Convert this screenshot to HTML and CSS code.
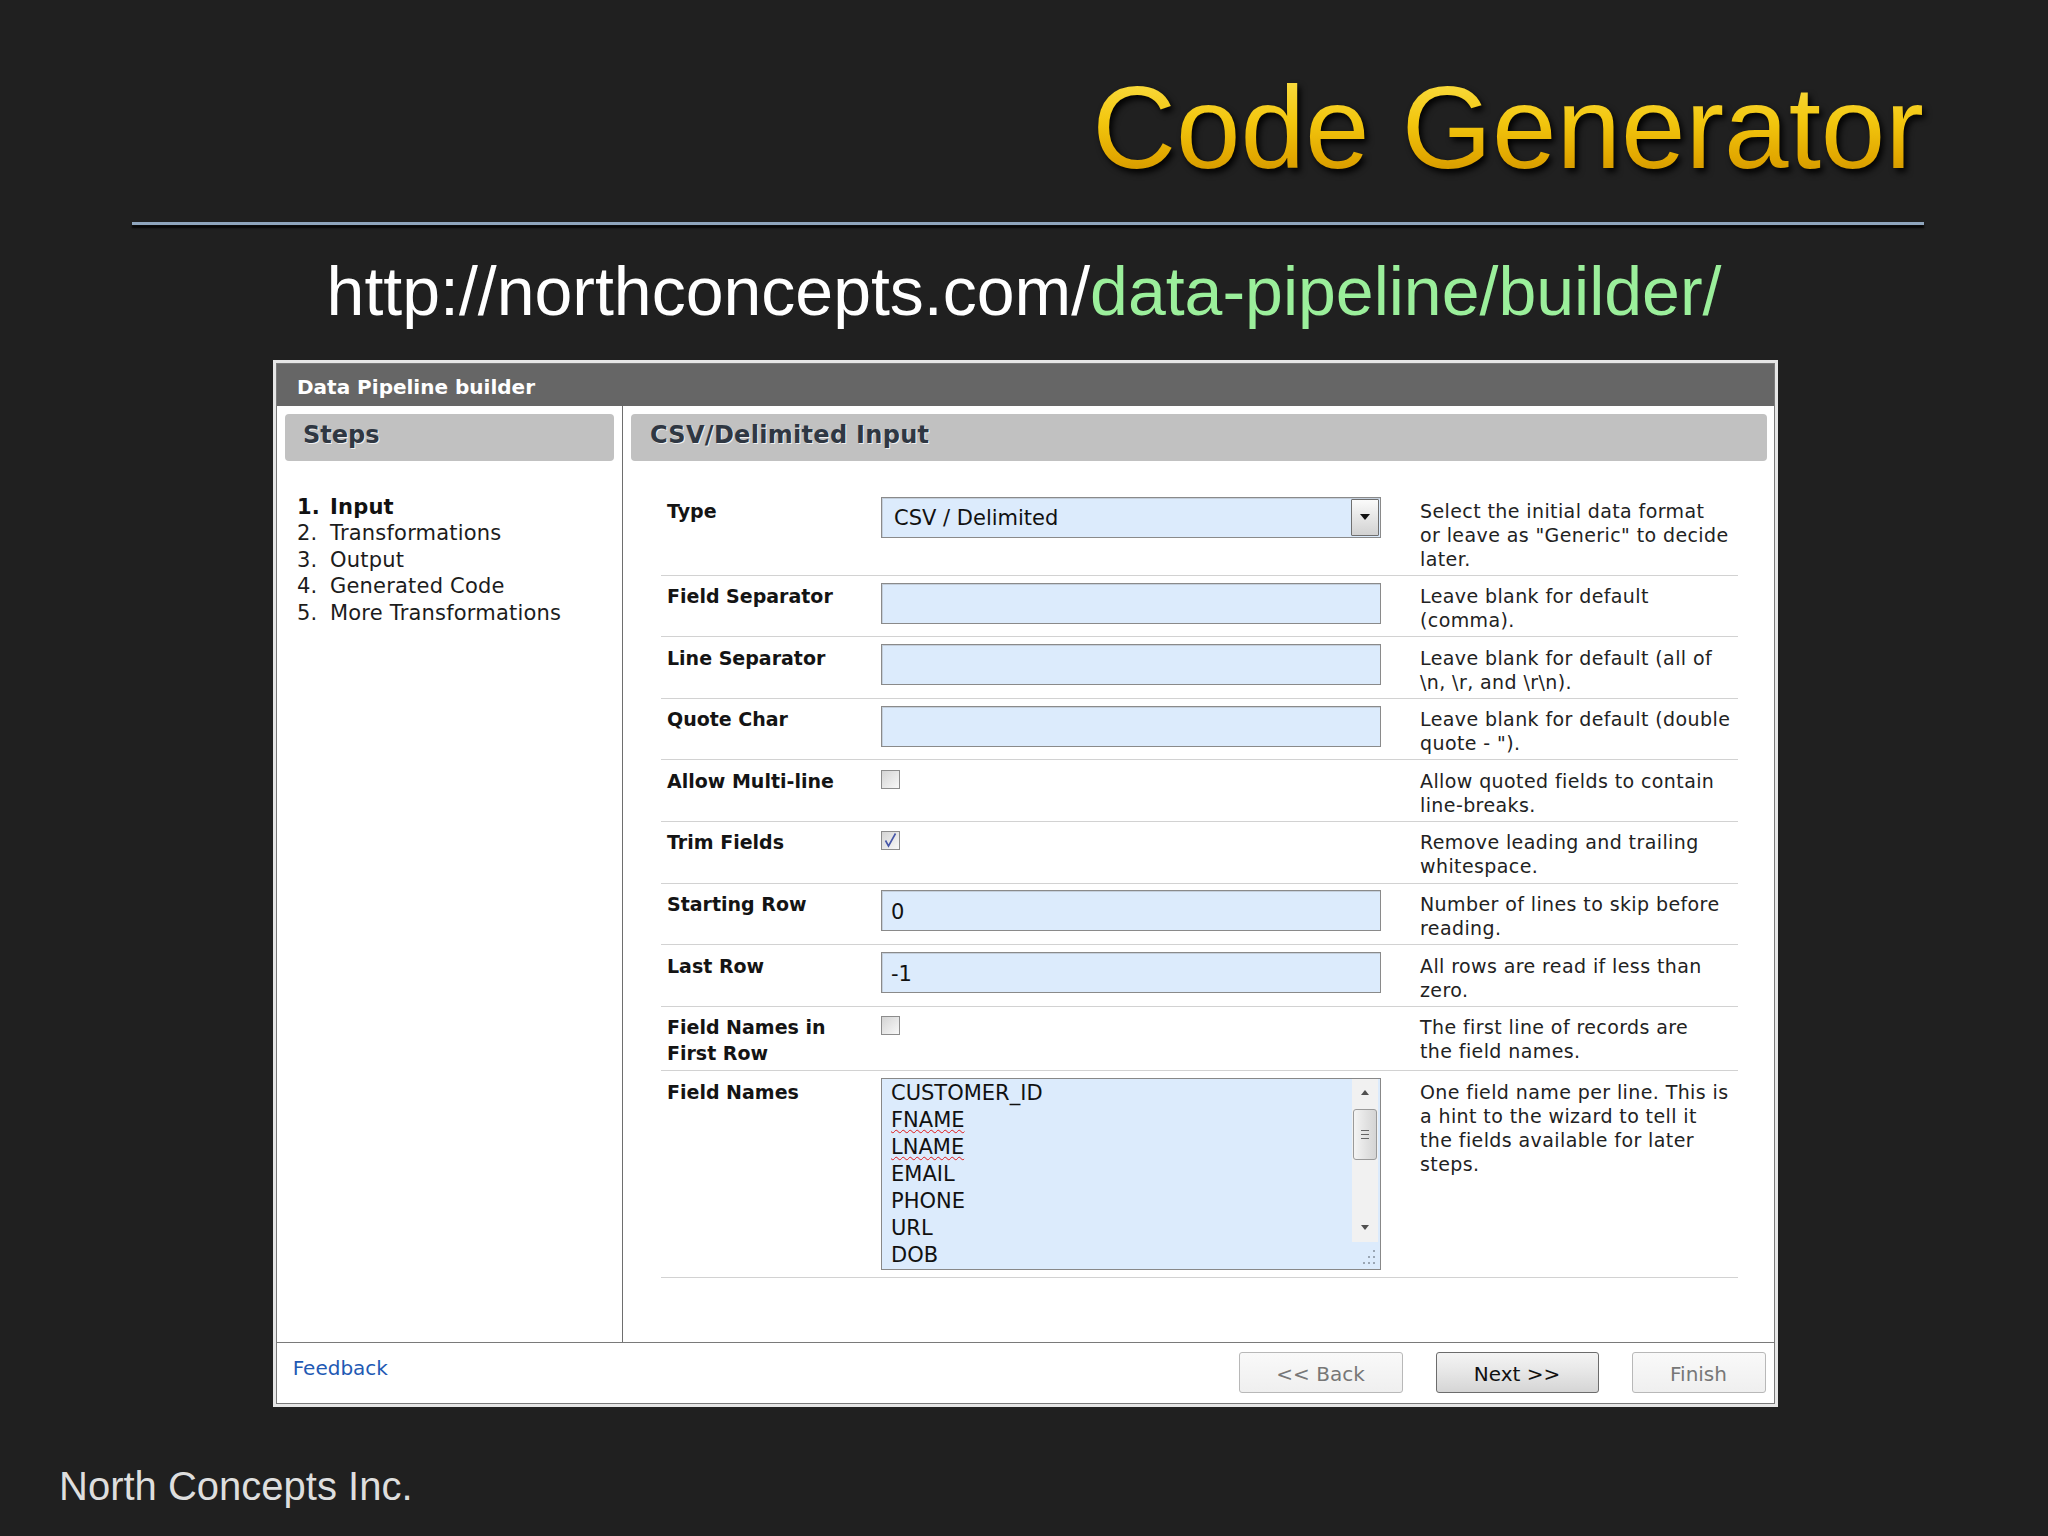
FILE: index.html
```html
<!DOCTYPE html>
<html>
<head>
<meta charset="utf-8">
<link rel="stylesheet" href="styles.css">
</head>
<body>
<div class="slide">
  <div class="title"><span>Code Generator</span></div>
  <div class="rule"></div>
  <div class="url">http://northconcepts.com/<span class="green">data-pipeline/builder/</span></div>

  <div class="window">
    <div class="win">
      <div class="titlebar">Data Pipeline builder</div>
      <div class="wbody">
        <div class="left">
          <div class="phead">Steps</div>
          <div class="steps">
            <div class="step cur"><span class="num">1.</span>Input</div>
            <div class="step"><span class="num">2.</span>Transformations</div>
            <div class="step"><span class="num">3.</span>Output</div>
            <div class="step"><span class="num">4.</span>Generated Code</div>
            <div class="step"><span class="num">5.</span>More Transformations</div>
          </div>
        </div>
        <div class="right">
          <div class="phead">CSV/Delimited Input</div>
          <div class="form">
            <div class="row">
              <div class="lbl">Type</div>
              <div class="cell"><div class="inp sel"><span class="val">CSV / Delimited</span><span class="dd"><span class="tri"></span></span></div></div>
              <div class="desc">Select the initial data format<br>or leave as "Generic" to decide<br>later.</div>
            </div>
            <div class="row">
              <div class="lbl">Field Separator</div>
              <div class="cell"><div class="inp"></div></div>
              <div class="desc">Leave blank for default<br>(comma).</div>
            </div>
            <div class="row">
              <div class="lbl">Line Separator</div>
              <div class="cell"><div class="inp"></div></div>
              <div class="desc">Leave blank for default (all of<br>\n, \r, and \r\n).</div>
            </div>
            <div class="row">
              <div class="lbl">Quote Char</div>
              <div class="cell"><div class="inp"></div></div>
              <div class="desc">Leave blank for default (double<br>quote - ").</div>
            </div>
            <div class="row">
              <div class="lbl">Allow Multi-line</div>
              <div class="cell"><div class="chk"></div></div>
              <div class="desc">Allow quoted fields to contain<br>line-breaks.</div>
            </div>
            <div class="row">
              <div class="lbl">Trim Fields</div>
              <div class="cell"><div class="chk"><svg width="17" height="17" viewBox="0 0 17 17"><path d="M3.5 8.5 L6.5 14 L13.5 1.5" fill="none" stroke="#4656a8" stroke-width="1.6"/></svg></div></div>
              <div class="desc">Remove leading and trailing<br>whitespace.</div>
            </div>
            <div class="row">
              <div class="lbl">Starting Row</div>
              <div class="cell"><div class="inp"><span class="val">0</span></div></div>
              <div class="desc">Number of lines to skip before<br>reading.</div>
            </div>
            <div class="row">
              <div class="lbl">Last Row</div>
              <div class="cell"><div class="inp"><span class="val">-1</span></div></div>
              <div class="desc">All rows are read if less than<br>zero.</div>
            </div>
            <div class="row tall">
              <div class="lbl">Field Names in<br>First Row</div>
              <div class="cell"><div class="chk"></div></div>
              <div class="desc">The first line of records are<br>the field names.</div>
            </div>
            <div class="row">
              <div class="lbl">Field Names</div>
              <div class="cell">
                <div class="ta">
                  <div class="lines">
                    <div>CUSTOMER_ID</div>
                    <div><span class="sp">FNAME</span></div>
                    <div><span class="sp">LNAME</span></div>
                    <div>EMAIL</div>
                    <div>PHONE</div>
                    <div>URL</div>
                    <div>DOB</div>
                  </div>
                  <div class="sbcol">
                    <div class="sb">
                      <div class="sbbtn"><span class="up"></span></div>
                      <div class="thumb"><span class="grip"></span></div>
                      <div class="track"></div>
                      <div class="sbbtn"><span class="down"></span></div>
                    </div>
                    <div class="resize">
                      <svg width="24" height="24" viewBox="0 0 24 24"><g fill="#9aa6b4"><rect x="19" y="5" width="2" height="2"/><rect x="14" y="11" width="2" height="2"/><rect x="19" y="11" width="2" height="2"/><rect x="9" y="17" width="2" height="2"/><rect x="14" y="17" width="2" height="2"/><rect x="19" y="17" width="2" height="2"/></g></svg>
                    </div>
                  </div>
                </div>
              </div>
              <div class="desc">One field name per line. This is<br>a hint to the wizard to tell it<br>the fields available for later<br>steps.</div>
            </div>
          </div>
        </div>
      </div>
      <div class="footer">
        <span class="fb">Feedback</span>
        <div class="btns">
          <div class="btn back">&lt;&lt; Back</div>
          <div class="btn next">Next &gt;&gt;</div>
          <div class="btn finish">Finish</div>
        </div>
      </div>
    </div>
  </div>

  <div class="company">North Concepts Inc.</div>
</div>
</body>
</html>
```
FILE: styles.css
```css
* { box-sizing: border-box; margin: 0; padding: 0; }
html, body { width: 2048px; height: 1536px; background: #202020; overflow: hidden; }
body { font-family: "DejaVu Sans", Verdana, sans-serif; }

.slide { width: 2048px; height: 1536px; display: flex; flex-direction: column; }

.title {
  font-family: "Liberation Sans", Arial, sans-serif;
  font-size: 116px;
  line-height: 116px;
  height: 116px;
  margin-top: 70px;
  text-align: right;
  padding-right: 124px;
}
.title span {
  display: inline-block;
  background: linear-gradient(#fbe04a 0%, #f2c60e 45%, #e2a800 75%, #c98e00 100%);
  -webkit-background-clip: text;
  background-clip: text;
  color: transparent;
  filter: drop-shadow(3px 4px 3px rgba(0, 0, 0, 0.95));
}

.rule {
  margin: 36px 0 0 132px;
  width: 1792px;
  height: 3px;
  background: #8fa5bd;
  box-shadow: 0 3px 2px #050505;
}

.url {
  margin-top: 26.4px;
  font-family: "Liberation Sans", Arial, sans-serif;
  font-size: 68px;
  line-height: 80px;
  height: 80px;
  text-align: center;
  color: #ffffff;
}
.url .green { color: #9bef9b; }

.window {
  margin: 28.6px 0 0 273px;
  width: 1505px;
  height: 1047px;
  padding: 3px;
  background: #e6e6e6;
}
.win {
  height: 100%;
  border: 1px solid #7a7a7a;
  background: #ffffff;
  display: flex;
  flex-direction: column;
}
.titlebar {
  height: 42px;
  flex: none;
  background: #666666;
  color: #ffffff;
  font-weight: bold;
  font-size: 20px;
  display: flex;
  align-items: center;
  padding: 4px 0 0 20px;
}

.wbody { flex: 1; display: flex; min-height: 0; }
.left {
  width: 346px;
  flex: none;
  border-right: 1px solid #6e6e6e;
  padding: 8px 8px 0 8px;
}
.right { flex: 1; padding: 8px 7px 0 8px; }

.phead {
  height: 47px;
  background: #c1c1c1;
  border-radius: 4px;
  display: flex;
  align-items: center;
  font-weight: bold;
  font-size: 24px;
  color: #2f3742;
  text-shadow: 1px 1px 0 #efefef;
  padding-bottom: 5px;
}
.left .phead { padding-left: 18px; }
.right .phead { padding-left: 19px; letter-spacing: 0.3px; }

.steps {
  margin-top: 33px;
  padding-left: 12px;
  font-size: 21px;
  letter-spacing: 0.2px;
  line-height: 26.5px;
  color: #1c1c1c;
}
.step .num { display: inline-block; width: 33px; }
.step.cur { font-weight: bold; color: #111; }

.form { margin: 29.2px 29px 0 30px; }
.row {
  display: grid;
  grid-template-columns: 220px 500px 1fr;
  padding: 8.4px 0 4.2px 0;
  border-bottom: 1px solid #d2d2d2;
}
.row.tall .lbl { line-height: 25.5px; }
.lbl {
  padding-left: 6px;
  font-weight: bold;
  font-size: 19px;
  line-height: 24px;
  color: #141414;
}
.desc {
  padding-left: 39px;
  font-size: 19px;
  letter-spacing: 0.4px;
  line-height: 24px;
  color: #222222;
  white-space: nowrap;
}

.inp {
  height: 41px;
  margin-top: -1.6px;
  border: 1px solid #8a8a8a;
  box-shadow: inset 1px 1px 0 #c4cfdc;
  background: #dcebfc;
  font-size: 21px;
  color: #111;
  display: flex;
  align-items: center;
  padding: 3px 0 0 9px;
}
.inp.sel { padding: 0 1px 0 12px; justify-content: space-between; }
.inp.sel .val { padding-top: 1px; }
.dd {
  width: 28px;
  height: 37px;
  border: 1px solid #6f6f6f;
  border-radius: 1px;
  background: linear-gradient(#fbfbfb, #e6e6e6 50%, #d2d2d2);
  display: flex;
  align-items: center;
  justify-content: center;
}
.tri {
  width: 0;
  height: 0;
  border-left: 5px solid transparent;
  border-right: 5px solid transparent;
  border-top: 6px solid #111;
}

.chk {
  width: 19px;
  height: 19px;
  margin-top: 1px;
  border: 1px solid #8c8c8c;
  background: linear-gradient(135deg, #d4d4d4, #f8f8f8);
  display: flex;
  align-items: center;
  justify-content: center;
}
.chk svg { display: block; }

.ta {
  height: 192px;
  margin: -2px 0 3px 0;
  border: 1px solid #888888;
  background: #dcebfc;
  display: flex;
  overflow: hidden;
}
.lines {
  flex: 1;
  padding: 1px 0 0 9px;
  font-size: 21px;
  line-height: 27px;
  color: #111;
  overflow: hidden;
}
.sp {
  text-decoration: underline wavy #e01818;
  text-decoration-thickness: 1px;
  text-underline-offset: 2px;
}
.sbcol {
  width: 26px;
  margin-right: 2px;
  display: flex;
  flex-direction: column;
}
.sb {
  height: 163px;
  background: #f1f1f1;
  display: flex;
  flex-direction: column;
}
.sbbtn {
  height: 28px;
  flex: none;
  display: flex;
  align-items: center;
  justify-content: center;
}
.up, .down {
  width: 0;
  height: 0;
  border-left: 4px solid transparent;
  border-right: 4px solid transparent;
}
.up { border-bottom: 5px solid #505050; }
.down { border-top: 5px solid #505050; }
.thumb {
  height: 51px;
  flex: none;
  margin: 2px 1px 0 1px;
  border: 1px solid #9a9a9a;
  border-radius: 3px;
  background: linear-gradient(90deg, #f4f4f4, #e2e2e2 55%, #d4d4d4);
  display: flex;
  align-items: center;
  justify-content: center;
}
.grip {
  width: 8px;
  height: 9px;
  border-top: 1px solid #666;
  border-bottom: 1px solid #666;
  background: linear-gradient(#666, #666) center / 100% 1px no-repeat;
}
.track { flex: 1; }
.resize { flex: 1; display: flex; align-items: flex-end; justify-content: flex-end; }
.resize svg { display: block; }

.footer {
  height: 61px;
  flex: none;
  border-top: 1px solid #7a7a7a;
  display: flex;
  align-items: flex-start;
  padding: 9px 8.5px 0 15.7px;
}
.fb {
  margin-top: 4px;
  font-size: 20px;
  line-height: 24px;
  color: #1f5ab4;
}
.btns { margin-left: auto; display: flex; gap: 33px; }
.btn {
  height: 41px;
  border: 1px solid #b8b8b8;
  border-radius: 3px;
  background: linear-gradient(#f9f9f9, #efefef);
  font-size: 20px;
  color: #777777;
  display: flex;
  align-items: center;
  justify-content: center;
  padding-top: 3px;
}
.btn.back { width: 164px; }
.btn.next {
  width: 163px;
  border-color: #6c6c6c;
  background: linear-gradient(#f4f4f4, #e6e6e6 50%, #d5d5d5);
  color: #111111;
}
.btn.finish { width: 134px; }

.company {
  margin: 55px 0 0 59px;
  font-family: "Liberation Sans", Arial, sans-serif;
  font-size: 40px;
  line-height: 48px;
  color: #dedede;
}
```
